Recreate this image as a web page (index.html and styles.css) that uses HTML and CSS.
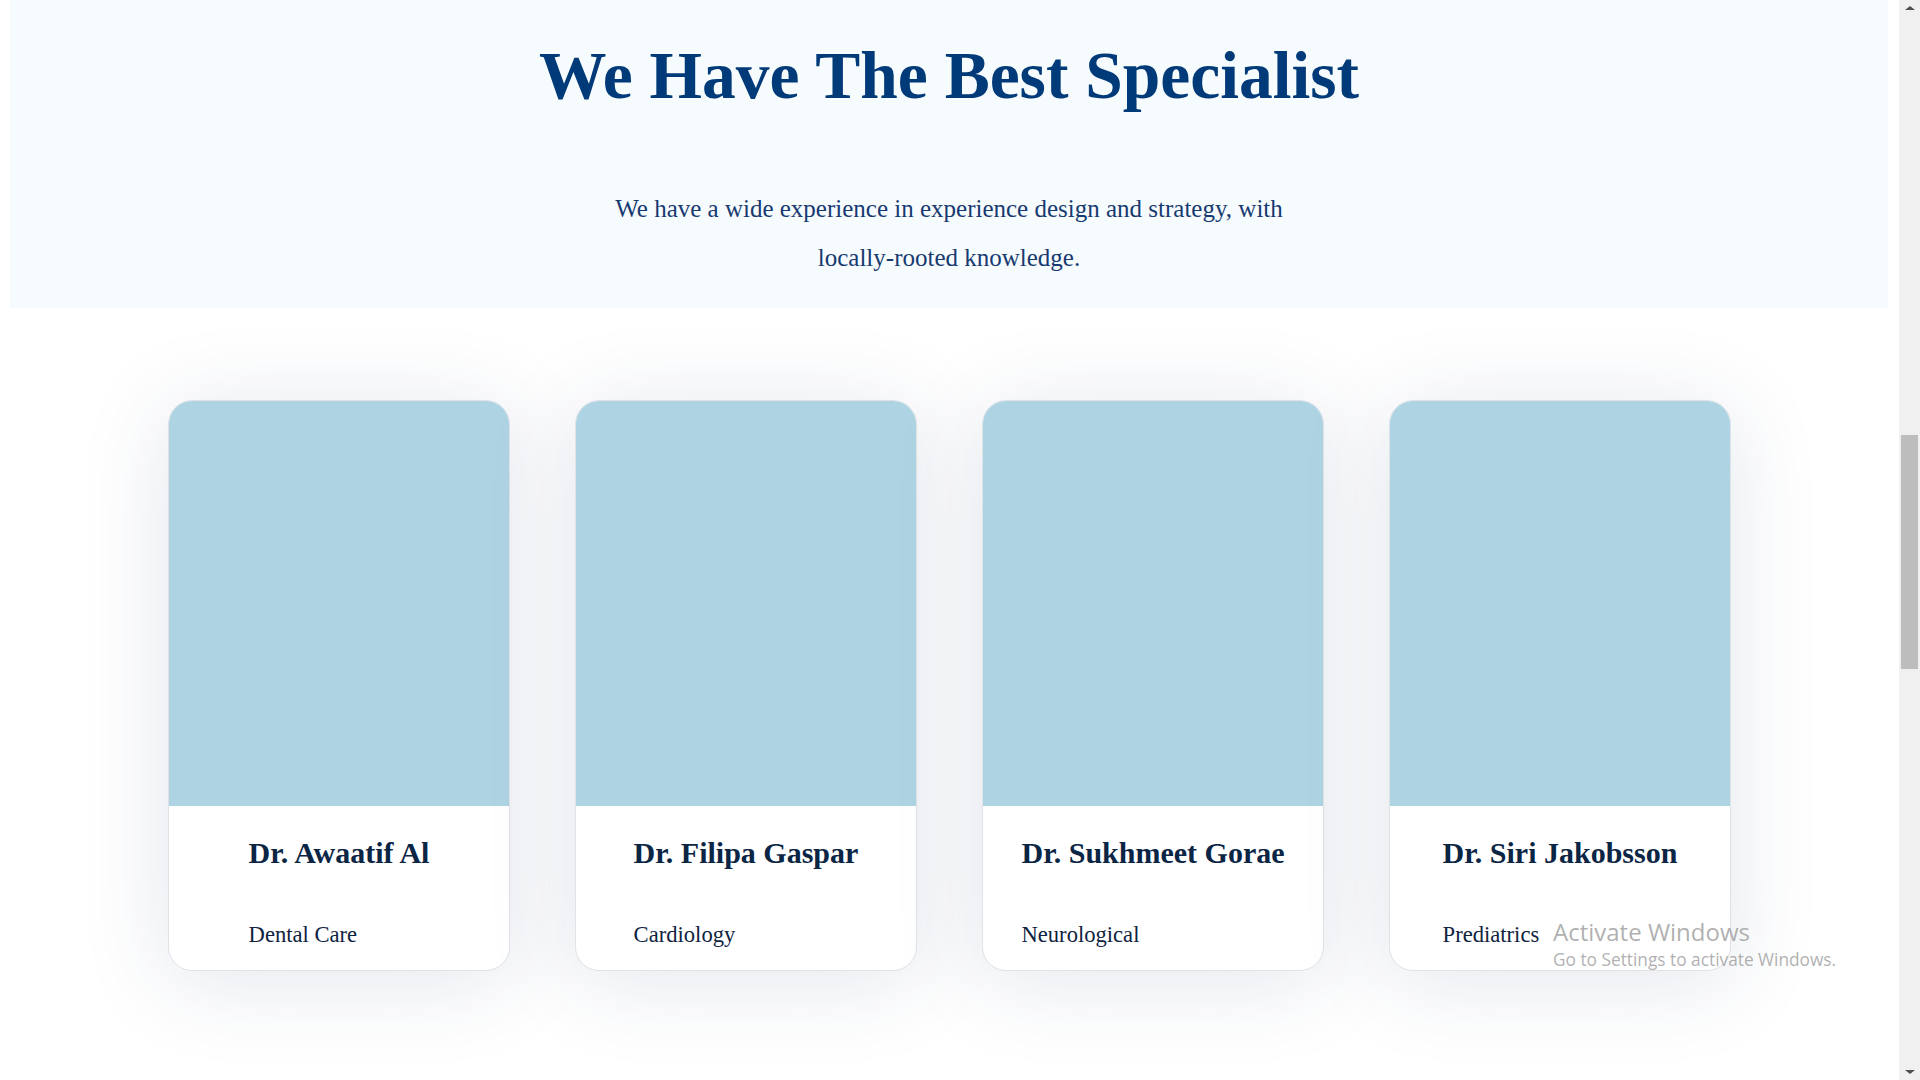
FILE: index.html
```html
<!DOCTYPE html>
<html lang="en">
<head>
<meta charset="utf-8">
<title>Specialists</title>
<link rel="stylesheet" href="styles.css">
</head>
<body>
<div class="page">
  <section class="intro">
    <h1 class="intro-title">We Have The Best Specialist</h1>
    <p class="intro-text">We have a wide experience in experience design and strategy, with locally-rooted knowledge.</p>
  </section>
  <section class="team">
    <article class="card">
      <div class="card-photo"></div>
      <div class="card-body">
        <div class="card-info">
          <h3 class="card-name">Dr. Awaatif Al</h3>
          <p class="card-role">Dental Care</p>
        </div>
      </div>
    </article>
    <article class="card">
      <div class="card-photo"></div>
      <div class="card-body">
        <div class="card-info">
          <h3 class="card-name">Dr. Filipa Gaspar</h3>
          <p class="card-role">Cardiology</p>
        </div>
      </div>
    </article>
    <article class="card">
      <div class="card-photo"></div>
      <div class="card-body">
        <div class="card-info">
          <h3 class="card-name">Dr. Sukhmeet Gorae</h3>
          <p class="card-role">Neurological</p>
        </div>
      </div>
    </article>
    <article class="card">
      <div class="card-photo"></div>
      <div class="card-body">
        <div class="card-info">
          <h3 class="card-name">Dr. Siri Jakobsson</h3>
          <p class="card-role">Prediatrics</p>
        </div>
      </div>
    </article>
  </section>
  <div class="watermark">
    <div class="watermark-title">Activate Windows</div>
    <div class="watermark-sub">Go to Settings to activate Windows.</div>
  </div>
</div>
<div class="scrollbar">
  <span class="arrow arrow-up"></span>
  <div class="track"><div class="thumb"></div></div>
  <span class="arrow arrow-down"></span>
</div>
</body>
</html>
```
FILE: styles.css
```css
html, body {
  margin: 0;
  padding: 0;
  height: 1080px;
  overflow: hidden;
  background: #ffffff;
}
body {
  display: flex;
  font-family: "Liberation Serif", "Times New Roman", serif;
}
.page {
  position: relative;
  flex: 1;
  min-width: 0;
}
.intro {
  margin: 0 11px 0 10px;
  height: 308px;
  background: #f6fbfe;
  text-align: center;
  box-sizing: border-box;
  padding-top: 31px;
}
.intro-title {
  margin: 0;
  font-size: 67.5px;
  line-height: 90px;
  font-weight: 700;
  color: #003a78;
}
.intro-text {
  width: 700px;
  margin: 63px auto 0;
  font-size: 25px;
  line-height: 49px;
  color: #173a70;
}
.team {
  display: flex;
  justify-content: center;
  gap: 65px;
  padding-top: 92px;
}
.card {
  width: 342px;
  height: 571px;
  box-sizing: border-box;
  border: 1px solid #dfe2e6;
  border-radius: 24px;
  overflow: hidden;
  background: #ffffff;
  box-shadow: 0 10px 90px rgba(40, 60, 110, 0.13);
}
.card-photo {
  height: 405px;
  background: #aed3e3;
}
.card-body {
  display: flex;
  justify-content: center;
  padding-top: 30px;
}
.card-info {
  text-align: left;
}
.card-name {
  margin: 0;
  font-size: 30px;
  line-height: 34px;
  font-weight: 700;
  color: #0b2545;
}
.card-role {
  margin: 52px 0 0;
  font-size: 22.6px;
  line-height: 26px;
  color: #0f2340;
}
.watermark {
  position: absolute;
  left: 1553px;
  top: 917px;
  font-family: "Open Sans", "Noto Sans", sans-serif;
  color: rgba(150, 150, 150, 0.75);
}
.watermark-title {
  font-size: 24px;
  line-height: 30px;
}
.watermark-sub {
  font-size: 17.3px;
  line-height: 26px;
}
.scrollbar {
  width: 21px;
  height: 1080px;
  background: #f0f0f0;
  display: flex;
  flex-direction: column;
  align-items: center;
}
.arrow {
  width: 0;
  height: 0;
  border-left: 5px solid transparent;
  border-right: 5px solid transparent;
}
.arrow-up {
  margin-top: 6px;
  border-bottom: 4px solid #505050;
}
.arrow-down {
  margin-bottom: 6px;
  border-top: 4px solid #505050;
}
.track {
  flex: 1;
  align-self: stretch;
  display: flex;
  justify-content: center;
}
.thumb {
  width: 17px;
  height: 234px;
  margin-top: 425px;
  background: #bdbdbd;
}
```
